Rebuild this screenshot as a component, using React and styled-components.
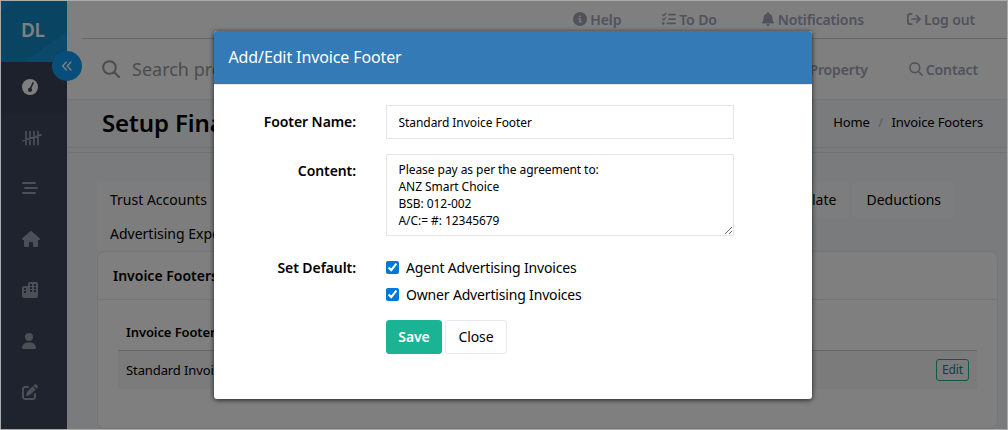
import React from 'react';
import styled, { createGlobalStyle } from 'styled-components';
import {
    FaCircleInfo,
    FaListCheck,
    FaBell,
    FaMagnifyingGlass,
    FaHouse,
    FaUser,
    FaPenToSquare,
} from 'react-icons/fa6';

const LogOutIcon = () => (
    <svg width="14" height="14" viewBox="0 0 14 14" fill="none" stroke="currentColor" strokeWidth="1.7" strokeLinecap="round" strokeLinejoin="round">
        <path d="M4.6 1.8H2.9a2 2 0 0 0-2 2v6.4a2 2 0 0 0 2 2h1.7M5 7h8M9.6 3.6 13 7l-3.4 3.4" />
    </svg>
);

const SearchIcon = ({ size = 14 }) => (
    <svg width={size} height={size} viewBox="0 0 14 14" fill="none" stroke="currentColor" strokeWidth="1.6" strokeLinecap="round">
        <path d="M10.7 5.8a4.9 4.9 0 1 1-9.8 0 4.9 4.9 0 0 1 9.8 0ZM9.4 9.4l3.8 3.8" />
    </svg>
);

const AnglesIcon = () => (
    <svg width="12" height="12" viewBox="0 0 12 12" fill="none" stroke="currentColor" strokeWidth="1.4" strokeLinecap="round" strokeLinejoin="round">
        <path d="M5.4 2 1.6 6l3.8 4M10 2 6.2 6l3.8 4" />
    </svg>
);

const GaugeIcon = () => (
    <svg width="16" height="16" viewBox="0 0 16 16">
        <circle cx="8" cy="8" r="8" fill="currentColor" />
        <path d="M11 4 8.7 9" stroke="#3e475b" strokeWidth="1.7" strokeLinecap="round" />
        <circle cx="8" cy="10.9" r="2.1" fill="#3e475b" />
    </svg>
);

const TallyIcon = () => (
    <svg width="20" height="16" viewBox="0 0 20 16" fill="none" stroke="currentColor" strokeWidth="1.7" strokeLinecap="round">
        <path d="M4 1.5v13M8 1.5v13M12 1.5v13M16 1.5v13M.9 10.8 19 4.9" />
    </svg>
);

const BarsIcon = () => (
    <svg width="16" height="14" viewBox="0 0 16 14" stroke="currentColor" strokeWidth="1.9" strokeLinecap="round">
        <path d="M1 2h12M3 7h12M1 12h12" />
    </svg>
);

const CityIcon = () => (
    <svg width="16" height="16" viewBox="0 0 16 16" fill="currentColor">
        <path fillRule="evenodd" d="M8 0h6a2 2 0 0 1 2 2v12a2 2 0 0 1-2 2H2a2 2 0 0 1-2-2V6a2 2 0 0 1 2-2h4V2a2 2 0 0 1 2-2ZM8 2v2h2V2ZM12 2v2h2V2ZM8 5v2h2V5ZM12 5v2h2V5ZM8 8v2h2V8ZM12 8v2h2V8ZM2 6v2h2V6ZM2 9v2h2V9Z" />
    </svg>
);

const topLinks = [
    { label: 'Help', icon: <FaCircleInfo />, gap: 41 },
    { label: 'To Do', icon: <FaListCheck />, gap: 44 },
    { label: 'Notifications', icon: <FaBell />, gap: 43 },
    { label: 'Log out', icon: <LogOutIcon />, gap: 0 },
];

const App = () => {
    return <Page>
        <GlobalStyle />
        <Sidebar>
            <Logo>DL</Logo>
            <SideItem $active><GaugeIcon /></SideItem>
            <SideItem><TallyIcon /></SideItem>
            <SideItem><BarsIcon /></SideItem>
            <SideItem><FaHouse size={18} /></SideItem>
            <SideItem><CityIcon /></SideItem>
            <SideItem $shift={-1}><FaUser /></SideItem>
            <SideItem><FaPenToSquare /></SideItem>
            <Toggle><AnglesIcon /></Toggle>
        </Sidebar>
        <Main>
            <TopBar>
                {topLinks.map(link => (
                    <NavLink key={link.label} $gap={link.gap}>{link.icon}{link.label}</NavLink>
                ))}
            </TopBar>
            <SearchBar>
                <SearchIcon size={18} />
                <SearchText>Search pro...</SearchText>
                <NavLink $gap={41}><SearchIcon />Property</NavLink>
                <NavLink $gap={0}><SearchIcon />Contact</NavLink>
            </SearchBar>
            <Heading>
                <Title>Setup Finance</Title>
                <Crumbs>Home<Slash>/</Slash>Invoice Footers</Crumbs>
            </Heading>
            <Content>
                <Tabs>
                    <Tab $grow>Trust Accounts</Tab>
                    <Tab>Template</Tab>
                    <Tab>Deductions</Tab>
                </Tabs>
                <Tabs>
                    <Tab>Advertising Expenses</Tab>
                </Tabs>
                <Card>
                    <CardHeader>Invoice Footers</CardHeader>
                    <Table>
                        <TableHead>Invoice Footer</TableHead>
                        <TableRow>Standard Invoice Footer<EditButton>Edit</EditButton></TableRow>
                    </Table>
                </Card>
            </Content>
        </Main>
        <Backdrop />
        <Modal>
            <ModalHeader>Add/Edit Invoice Footer</ModalHeader>
            <Form>
                <Label>Footer Name:</Label>
                <Input defaultValue="Standard Invoice Footer" />
                <Label>Content:</Label>
                <TextArea defaultValue={'Please pay as per the agreement to:\nANZ Smart Choice\nBSB: 012-002\nA/C:= #: 12345679'} spellCheck={false} />
                <Label $short>Set Default:</Label>
                <Checks>
                    <CheckLabel><Check type="checkbox" defaultChecked />Agent Advertising Invoices</CheckLabel>
                    <CheckLabel><Check type="checkbox" defaultChecked />Owner Advertising Invoices</CheckLabel>
                    <Buttons>
                        <Button $primary>Save</Button>
                        <Button>Close</Button>
                    </Buttons>
                </Checks>
            </Form>
        </Modal>
        <Frame />
    </Page>;
};

const GlobalStyle = createGlobalStyle`
    * {
        box-sizing: border-box;
    }
    body {
        margin: 0;
        font-family: "Noto Sans", "Open Sans", sans-serif;
        font-size: 14px;
        color: #000;
        overflow: hidden;
    }
`;

const Page = styled.div`
    position: relative;
    display: flex;
    width: 1008px;
    height: 430px;
    padding: 1px;
    overflow: hidden;
    background: #f3f6fa;
`;

const Frame = styled.div`
    position: absolute;
    inset: 0;
    border: 1px solid #ababab;
    pointer-events: none;
`;

const Sidebar = styled.div`
    position: relative;
    flex: none;
    width: 66px;
    background: #3e475b;
    color: #9a9eac;
`;

const Logo = styled.div`
    height: 61px;
    padding-left: 20px;
    line-height: 59px;
    font-size: 19px;
    font-weight: 600;
    letter-spacing: -0.3px;
    color: #fff;
    background: linear-gradient(145deg, #148fd2 0 10%, #1288c6 10% 72%, #1690d2 72%);
`;

const SideItem = styled.div`
    display: flex;
    align-items: center;
    height: 50.8px;
    padding: 0 0 1px 21px;
    margin-left: ${props => props.$shift || 0}px;
    font-size: 16px;
    color: ${props => props.$active ? '#fff' : 'inherit'};
    background: ${props => props.$active ? '#3a4256' : 'none'};
`;

const Toggle = styled.div`
    position: absolute;
    top: 50px;
    left: 51px;
    display: flex;
    align-items: center;
    justify-content: center;
    width: 30px;
    height: 30px;
    border-radius: 50%;
    color: #fff;
    background: #0e9cf5;
`;

const Main = styled.div`
    flex: 1;
    min-width: 0;
`;

const TopBar = styled.div`
    display: flex;
    justify-content: flex-end;
    align-items: center;
    height: 38px;
    margin-left: 15px;
    padding: 0 32px 1px 0;
    border-bottom: 1px solid #ccc;
    background: #fff;
    box-shadow: -15px 0 0 #fff;
`;

const NavLink = styled.div`
    display: flex;
    align-items: center;
    gap: 3px;
    margin-right: ${props => props.$gap}px;
    font-size: 14px;
    font-weight: 600;
    letter-spacing: -0.13px;
    color: #a0a6b8;
    white-space: nowrap;
`;

const SearchBar = styled.div`
    display: flex;
    align-items: center;
    height: 60px;
    padding: 0 29px 0 35px;
    color: #999;
    background: #fff;
`;

const SearchText = styled.div`
    flex: 1;
    padding-left: 12px;
    font-size: 18px;
`;

const Heading = styled.div`
    display: flex;
    align-items: center;
    justify-content: space-between;
    height: 49px;
    padding: 0 24px 0 35px;
    border-top: 1px solid #e7eaec;
    border-bottom: 1px solid #e2e5e8;
    background: #f4f6f8;
`;

const Title = styled.div`
    padding-bottom: 2px;
    font-size: 24px;
    font-weight: 600;
    letter-spacing: -0.1px;
`;

const Crumbs = styled.div`
    font-size: 13px;
    letter-spacing: -0.12px;
    padding-bottom: 4px;
`;

const Slash = styled.span`
    margin: 0 8.5px;
    color: #bbb;
`;

const Content = styled.div`
    height: 277px;
    margin-top: 4px;
    padding: 30px 9px 0 30px;
    border-top: 1px solid #e2e5e8;
`;

const Tabs = styled.div`
    display: flex;
    gap: 4px;
    height: 34px;
    padding-right: 44px;
`;

const Tab = styled.div`
    flex: ${props => props.$grow ? 1 : 'none'};
    padding: 0 13px;
    line-height: 33px;
    font-size: 14px;
    background: #fbfbfb;
`;

const Card = styled.div`
    height: 178px;
    border: 1px solid #e7eaec;
    border-radius: 8px;
    background: #fff;
`;

const CardHeader = styled.div`
    height: 48px;
    padding-left: 15px;
    line-height: 47px;
    font-weight: 600;
    border-bottom: 1px solid #e7eaec;
`;

const Table = styled.div`
    padding: 14px 20px;
    font-size: 13px;
    letter-spacing: -0.1px;
`;

const TableHead = styled.div`
    height: 37px;
    padding-left: 8px;
    line-height: 37px;
    font-weight: 600;
    border-bottom: 1px solid #ccc;
`;

const TableRow = styled.div`
    display: flex;
    align-items: center;
    justify-content: space-between;
    height: 38px;
    padding: 0 8px 1px;
    background: #f7f7f7;
`;

const EditButton = styled.div`
    width: 33px;
    height: 22px;
    line-height: 20px;
    border: 1px solid #1ab394;
    border-radius: 3px;
    text-align: center;
    font-size: 12px;
    color: #1a7f8a;
`;

const Backdrop = styled.div`
    position: absolute;
    inset: 0;
    background: rgba(0, 0, 0, 0.5);
`;

const Modal = styled.div`
    position: absolute;
    top: 31px;
    left: 214px;
    width: 598px;
    height: 368px;
    border-radius: 3px;
    overflow: hidden;
    background: #fff;
    box-shadow: 0 1px 5px rgba(0, 0, 0, 0.75);
`;

const ModalHeader = styled.div`
    height: 54px;
    padding-left: 14.5px;
    line-height: 52px;
    font-size: 16px;
    letter-spacing: -0.12px;
    color: #fff;
    background: #337ab7;
    border-bottom: 1px solid #e5e5e5;
`;

const Form = styled.div`
    display: grid;
    grid-template-columns: 142px 348px;
    column-gap: 30px;
    row-gap: 15px;
    padding-top: 20px;
`;

const Label = styled.div`
    text-align: right;
    line-height: ${props => props.$short ? 33 : 34}px;
    font-weight: 600;
    letter-spacing: -0.08px;
`;

const Input = styled.input`
    width: 348px;
    height: 34px;
    padding: 6px 11.5px;
    border: 1px solid #e5e6e7;
    font: 12px "Noto Sans", "Open Sans", sans-serif;
    letter-spacing: -0.06px;
    outline: none;
`;

const TextArea = styled.textarea`
    display: block;
    width: 348px;
    height: 82px;
    padding: 6px 11.5px;
    border: 1px solid #e5e6e7;
    font: 12px/17px "Noto Sans", "Open Sans", sans-serif;
    letter-spacing: -0.06px;
    outline: none;
    overflow: hidden;
`;

const Checks = styled.div`
    padding-top: 3px;
`;

const CheckLabel = styled.label`
    display: flex;
    align-items: center;
    height: 27px;
    letter-spacing: -0.17px;
`;

const Check = styled.input`
    width: 13px;
    height: 13px;
    margin: 0 7px 0 0;
    accent-color: #0078d7;
`;

const Buttons = styled.div`
    display: flex;
    gap: 3px;
    padding-top: 12px;
`;

const Button = styled.button`
    width: ${props => props.$primary ? 56 : 62}px;
    height: 34px;
    padding: 0 0 2px;
    border: 1px solid ${props => props.$primary ? '#1ab394' : '#e7eaec'};
    border-radius: 3px;
    font: ${props => props.$primary ? 600 : 400} 14px "Noto Sans", "Open Sans", sans-serif;
    letter-spacing: -0.1px;
    color: ${props => props.$primary ? '#fff' : '#000'};
    background: ${props => props.$primary ? '#1ab394' : '#fff'};
`;

export default App;
